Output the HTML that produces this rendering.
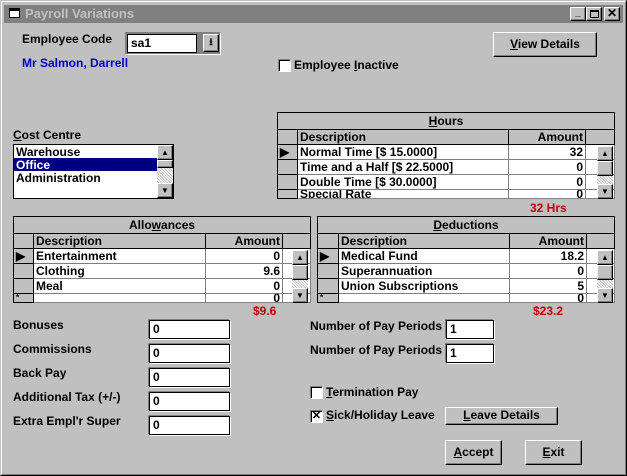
<!DOCTYPE html>
<html><head><meta charset="utf-8"><style>
*{box-sizing:border-box;margin:0;padding:0}
body{width:627px;height:476px;overflow:hidden;background:#c0c0c0;font-family:"Liberation Sans",Arial,sans-serif;font-weight:bold;font-size:12px;color:#000;position:relative}
.a{position:absolute}
.lbl{position:absolute;white-space:nowrap;font-size:12px;line-height:14px}
.tb{position:absolute;background:#fff;border:1px solid #000;box-shadow:-1px -1px 0 #808080,1px 1px 0 #fff;padding-left:3px;font-size:12px;line-height:16px}
.btn{position:absolute;background:#c0c0c0;border:1px solid;border-color:#fff #000 #000 #fff;box-shadow:inset -1px -1px 0 #808080;text-align:center;font-size:12px}
.chk{position:absolute;width:13px;height:13px;background:#fff;border:1px solid;border-color:#808080 #fff #fff #808080;box-shadow:inset 1px 1px 0 #000;font-size:11px;line-height:11px;text-align:center}
u{text-decoration:underline}
.sb{position:absolute;width:16px;background:#c0c0c0}
.sbb{position:absolute;left:0;width:16px;height:15px;background:#c0c0c0;border:1px solid;border-color:#fff #000 #000 #fff;box-shadow:inset -1px -1px 0 #808080;font-size:8px;line-height:13px;text-align:center}
.pat{position:absolute;left:0;width:16px;background:repeating-linear-gradient(45deg,#fff 0 1px,#c0c0c0 1px 2px)}
table{position:absolute;border-collapse:collapse;table-layout:fixed;background:#c0c0c0}
td{border:1px solid #000;height:15px;padding:0 2px;font-size:12px;line-height:13px;white-space:nowrap;overflow:hidden}
td.w{background:#fff;border-color:#808080}
td.g{background:#c0c0c0}
td.r{text-align:right}
.tr td{text-align:center;height:17px}
.red{color:#c00000}
</style></head><body>
<!-- window frame -->
<div class="a" style="left:0;top:0;width:627px;height:476px;border:1px solid;border-color:#c0c0c0 #000 #000 #c0c0c0"></div>
<div class="a" style="left:1px;top:1px;width:625px;height:474px;border:1px solid;border-color:#fff #808080 #808080 #fff"></div>
<div class="a" style="left:4px;top:5px;width:619px;height:18px;background:#808080"></div>
<div class="a" style="left:9px;top:8px;width:11px;height:10px;background:#fff;border:1px solid #000;border-top-width:3px"></div>
<div class="lbl" style="left:25px;top:7px;color:#c0c0c0;font-size:13px">Payroll Variations</div>
<div class="btn" style="left:570px;top:7px;width:16px;height:14px;font-size:10px;line-height:10px">_</div>
<div class="btn" style="left:586px;top:7px;width:16px;height:14px"><div class="a" style="left:3px;top:2px;width:9px;height:8px;border:1px solid #000;border-top-width:2px"></div></div>
<div class="btn" style="left:604px;top:7px;width:16px;height:14px;font-size:12px;line-height:11px">✕</div>

<div class="lbl" style="left:22px;top:32px">Employee Code</div>
<div class="a" style="left:125px;top:32px;width:96px;height:23px;background:#808080;border:1px solid;border-color:#808080 #fff #fff #808080"></div>
<div class="a" style="left:127px;top:34px;width:70px;height:19px;background:#fff;border:1px solid #000;padding-left:3px;line-height:17px">sa1</div>
<div class="btn" style="left:203px;top:34px;width:16px;height:18px;font-size:10px;line-height:15px">⭳</div>
<div class="lbl" style="left:22px;top:56px;color:#0000c0">Mr Salmon, Darrell</div>
<div class="chk" style="left:278px;top:59px"></div>
<div class="lbl" style="left:294px;top:58px">Employee <u>I</u>nactive</div>
<div class="btn" style="left:493px;top:32px;width:104px;height:25px;line-height:22px"><u>V</u>iew Details</div>

<div class="lbl" style="left:13px;top:128px"><u>C</u>ost Centre</div>
<div class="a" style="left:13px;top:144px;width:161px;height:55px;background:#fff;border:1px solid #000"></div>
<div class="lbl" style="left:16px;top:145px">Warehouse</div>
<div class="a" style="left:14px;top:158px;width:143px;height:13px;background:#000080"></div>
<div class="lbl" style="left:16px;top:158px;color:#fff">Office</div>
<div class="lbl" style="left:16px;top:171px">Administration</div>
<div class="sb" style="left:157px;top:145px;height:53px">
 <div class="sbb" style="top:0">▲</div><div class="sbb" style="top:15px;height:8px"></div><div class="pat" style="top:23px;height:15px"></div><div class="sbb" style="top:38px">▼</div></div>

<!-- Hours -->
<table style="left:277px;top:112px;width:337px">
<colgroup><col style="width:20px"><col style="width:211px"><col style="width:77px"><col style="width:29px"></colgroup>
<tr class="tr"><td colspan="4"><u>H</u>ours</td></tr>
<tr><td class="g"></td><td class="g">Description</td><td class="g r">Amount</td><td class="g"></td></tr>
<tr><td class="g">&#9654;</td><td class="w">Normal Time [$ 15.0000]</td><td class="w r">32</td><td class="w"></td></tr>
<tr><td class="g"></td><td class="w">Time and a Half [$ 22.5000]</td><td class="w r">0</td><td class="w"></td></tr>
<tr><td class="g"></td><td class="w">Double Time [$ 30.0000]</td><td class="w r">0</td><td class="w"></td></tr>
<tr><td class="g" style="height:9px"></td><td class="w" style="height:9px;vertical-align:top;line-height:8px;overflow:hidden">Special Rate</td><td class="w r" style="height:9px;line-height:8px">0</td><td class="w" style="height:9px"></td></tr>
</table>
<div class="sb" style="left:597px;top:146px;height:54px"><div class="sbb" style="top:0">▲</div><div class="sbb" style="top:15px"></div><div class="pat" style="top:30px;height:8px"></div><div class="sbb" style="top:38px">▼</div></div>
<div class="lbl red" style="left:530px;top:201px">32 Hrs</div>

<!-- Allowances -->
<table style="left:13px;top:216px;width:297px">
<colgroup><col style="width:20px"><col style="width:172px"><col style="width:77px"><col style="width:28px"></colgroup>
<tr class="tr"><td colspan="4">Allo<u>w</u>ances</td></tr>
<tr><td class="g"></td><td class="g">Description</td><td class="g r">Amount</td><td class="g"></td></tr>
<tr><td class="g">&#9654;</td><td class="w">Entertainment</td><td class="w r">0</td><td class="w"></td></tr>
<tr><td class="g"></td><td class="w">Clothing</td><td class="w r">9.6</td><td class="w"></td></tr>
<tr><td class="g"></td><td class="w">Meal</td><td class="w r">0</td><td class="w"></td></tr>
<tr><td class="g" style="height:9px;font-size:8px;line-height:8px">*</td><td class="w" style="height:9px"></td><td class="w r" style="height:9px;line-height:8px">0</td><td class="w" style="height:9px"></td></tr>
</table>
<div class="sb" style="left:292px;top:250px;height:54px"><div class="sbb" style="top:0">▲</div><div class="sbb" style="top:15px"></div><div class="pat" style="top:30px;height:8px"></div><div class="sbb" style="top:38px">▼</div></div>
<div class="lbl red" style="left:253px;top:304px">$9.6</div>

<!-- Deductions -->
<table style="left:317px;top:216px;width:297px">
<colgroup><col style="width:21px"><col style="width:171px"><col style="width:77px"><col style="width:28px"></colgroup>
<tr class="tr"><td colspan="4"><u>D</u>eductions</td></tr>
<tr><td class="g"></td><td class="g">Description</td><td class="g r">Amount</td><td class="g"></td></tr>
<tr><td class="g">&#9654;</td><td class="w">Medical Fund</td><td class="w r">18.2</td><td class="w"></td></tr>
<tr><td class="g"></td><td class="w">Superannuation</td><td class="w r">0</td><td class="w"></td></tr>
<tr><td class="g"></td><td class="w">Union Subscriptions</td><td class="w r">5</td><td class="w"></td></tr>
<tr><td class="g" style="height:9px;font-size:8px;line-height:8px">*</td><td class="w" style="height:9px"></td><td class="w r" style="height:9px;line-height:8px">0</td><td class="w" style="height:9px"></td></tr>
</table>
<div class="sb" style="left:597px;top:250px;height:54px"><div class="sbb" style="top:0">▲</div><div class="sbb" style="top:15px"></div><div class="pat" style="top:30px;height:8px"></div><div class="sbb" style="top:38px">▼</div></div>
<div class="lbl red" style="left:533px;top:304px">$23.2</div>

<div class="lbl" style="left:13px;top:318px">Bonuses</div>
<div class="lbl" style="left:13px;top:342px">Commissions</div>
<div class="lbl" style="left:13px;top:366px">Back Pay</div>
<div class="lbl" style="left:13px;top:390px">Additional Tax (+/-)</div>
<div class="lbl" style="left:13px;top:414px">Extra Empl'r Super</div>
<div class="tb" style="left:149px;top:320px;width:81px;height:19px">0</div>
<div class="tb" style="left:149px;top:344px;width:81px;height:19px">0</div>
<div class="tb" style="left:149px;top:368px;width:81px;height:19px">0</div>
<div class="tb" style="left:149px;top:392px;width:81px;height:19px">0</div>
<div class="tb" style="left:149px;top:416px;width:81px;height:19px">0</div>

<div class="lbl" style="left:310px;top:319px">Number of Pay Periods</div>
<div class="lbl" style="left:310px;top:343px">Number of Pay Periods</div>
<div class="tb" style="left:446px;top:320px;width:48px;height:19px">1</div>
<div class="tb" style="left:446px;top:344px;width:48px;height:19px">1</div>

<div class="chk" style="left:310px;top:386px"></div>
<div class="lbl" style="left:326px;top:385px"><u>T</u>ermination Pay</div>
<div class="chk" style="left:310px;top:410px">✕</div>
<div class="lbl" style="left:326px;top:408px"><u>S</u>ick/Holiday Leave</div>
<div class="btn" style="left:445px;top:407px;width:113px;height:18px;line-height:15px"><u>L</u>eave Details</div>
<div class="btn" style="left:445px;top:440px;width:57px;height:25px;line-height:22px"><u>A</u>ccept</div>
<div class="btn" style="left:525px;top:440px;width:57px;height:25px;line-height:22px"><u>E</u>xit</div>
</body></html>
